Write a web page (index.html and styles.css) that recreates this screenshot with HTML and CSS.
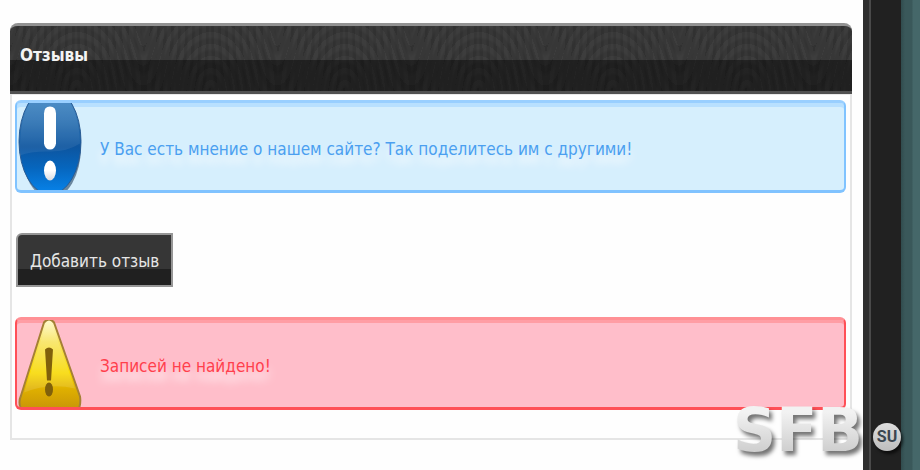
FILE: index.html
```html
<!DOCTYPE html>
<html lang="ru">
<head>
  <meta charset="UTF-8" />
  <meta name="viewport" content="width=device-width, initial-scale=1.0"/>
  <title>Отзывы</title>
  <link rel="stylesheet" href="styles.css">
</head>
<body>
  <div class="page">
    <main class="content">
      <section class="panel">
        <h1 class="panel-title">Отзывы</h1>
        <div class="panel-body">
          <div class="message info">
            <!-- Info icon -->
            <svg class="message-icon" viewBox="0 0 64 86" aria-hidden="true">
              <defs>
                <linearGradient id="ball" x1="0" y1="0" x2="0" y2="1">
                  <stop offset="0" stop-color="#4a8fcb"/>
                  <stop offset="0.3" stop-color="#2f74b4"/>
                  <stop offset="0.55" stop-color="#0d559f"/>
                  <stop offset="0.75" stop-color="#0666be"/>
                  <stop offset="1" stop-color="#0785ed"/>
                </linearGradient>
                <linearGradient id="mark" x1="0" y1="0" x2="0" y2="1">
                  <stop offset="0.5" stop-color="#ffffff"/>
                  <stop offset="1" stop-color="#d9dce2"/>
                </linearGradient>
              </defs>
              <ellipse cx="33" cy="43" rx="30" ry="52" fill="#23415f" opacity="0.6"/>
              <ellipse cx="32" cy="38" rx="31" ry="53" fill="url(#ball)" stroke="#2b5c94"/>
              <path d="M2 40Q3 8 16-6H48Q61 8 62 40Q48 49 29 48Q12 48 2 52Z" fill="#fff" opacity="0.07"/>
              <path d="M26 10Q26 3 32 3T38 10V40Q37 46 32 46T26 40Z" fill="#fff"/>
              <ellipse cx="32" cy="67" rx="6" ry="10" fill="url(#mark)"/>
            </svg>
            <p class="message-text">У Вас есть мнение о нашем сайте? Так поделитесь им с другими!</p>
          </div>

          <button class="btn" type="button">Добавить отзыв</button>

          <div class="message error">
            <!-- Warning icon -->
            <svg class="message-icon" viewBox="0 0 64 86" aria-hidden="true">
              <defs>
                <linearGradient id="sign" x1="0" y1="0" x2="0" y2="1">
                  <stop offset="0" stop-color="#fffbd0"/>
                  <stop offset="0.25" stop-color="#f8e45e"/>
                  <stop offset="0.6" stop-color="#f8d900"/>
                  <stop offset="0.78" stop-color="#dfb000"/>
                  <stop offset="1" stop-color="#c99607"/>
                </linearGradient>
              </defs>
              <path d="M26 2Q31-4 36 2L62 76Q63 82 61 88H3Q0 82 3 75Z" fill="url(#sign)" stroke="#a58035" stroke-width="2"/>
              <path d="M28 4Q31-1 34 4L57 68Q31 62 6 72Z" fill="#fff" opacity="0.12"/>
              <path d="M27 29Q31 25 35 29L33 60H29Z" fill="#80600b"/>
              <ellipse cx="31" cy="69" rx="4" ry="7" fill="#80600b"/>
            </svg>
            <p class="message-text">Записей не найдено!</p>
          </div>
        </div>
      </section>
    </main>
    <aside class="edge"></aside>
  </div>

  <!-- Site mark over the bottom right corner -->
  <div class="mark">
    <span class="mark-name">SFB</span>
    <span class="mark-zone">SU</span>
  </div>
</body>
</html>
```

FILE: styles.css
```css
* {
  margin: 0;
  padding: 0;
  box-sizing: border-box;
}

body {
  font-family: 'DejaVu Sans Condensed', 'DejaVu Sans', sans-serif;
  background: #fefefe;
  color: #222;
  overflow: hidden;
}

.page {
  display: flex;
  min-height: 100vh;
}

.content {
  flex: 1;
  min-width: 0;
  padding: 23px 11px 30px 10px;
}

/* Panel */
.panel {
  border: 2px solid #e5e5e5;
  border-top: none;
  border-radius: 8px 8px 0 0;
}

.panel-title {
  margin: 0 -2px;
  height: 71px;
  padding: 0 10px;
  border-top: 3px solid #929292;
  border-bottom: 3px solid #505050;
  border-radius: 8px 8px 0 0;
  background:
    linear-gradient(transparent 34px, rgba(0, 0, 0, 0.42) 34px),
    repeating-radial-gradient(ellipse 16px 24px at 50% 100%, rgba(0, 0, 0, 0.1) 0 3px, transparent 5px 8px) 0 0 / 134px 66px,
    repeating-radial-gradient(ellipse 12px 34px at 50% 0, rgba(0, 0, 0, 0.1) 0 2px, transparent 4px 7px) 66px 0 / 134px 66px,
    #3d3d3d;
  color: #f4f4f4;
  font-size: 17px;
  line-height: 58px;
}

.panel-body {
  padding: 5px 4px 28px 3px;
  border-top: 1px solid #e8e8e8;
}

/* Messages */
.message {
  display: flex;
  align-items: center;
  height: 93px;
  padding-left: 1px;
  border: 2px solid;
  border-width: 3px 2px;
  border-radius: 6px;
  overflow: hidden;
}

.message-icon {
  flex: none;
  width: 64px;
  height: 87px;
}

.message-text {
  padding: 4px 0 0 18px;
  font-size: 17px;
  line-height: 28px;
}

.info {
  border-color: #99cfff #80c3ff #80c3ff;
  background: #d6effd;
  box-shadow: inset 0 4px 0 #b8e0ff;
  color: #4b9ff0;
  text-shadow: 0 9px 9px #fff;
}

.error {
  border-color: #ff9095 #ff5057 #ff5057;
  background: #ffbeca;
  box-shadow: inset 0 3px 0 #ff9da4;
  color: #ff3f4c;
  text-shadow: 0 9px 9px #fff;
}

/* Button */
.btn {
  display: block;
  height: 54px;
  margin: 40px 0 30px 1px;
  padding: 2px 12px 0;
  border: 2px solid #969696;
  border-radius: 6px 0 0 0;
  background: linear-gradient(#363636 34px, #202020 34px);
  color: #e6e6e6;
  font-family: inherit;
  font-size: 17px;
  cursor: pointer;
}

.btn:hover {
  color: #fff;
}

/* Right edge of the site */
.edge {
  flex: none;
  width: 57px;
  background: linear-gradient(to right, #2e2e2e 6px, #4a4a4a 6px 8px, #212121 8px 38px, #304b4d 38px, #3a585a 42px 49px, #456769 50px);
}

/* Site mark */
.mark {
  position: absolute;
  right: 19px;
  bottom: 10px;
  display: flex;
  align-items: center;
  gap: 10px;
}

.mark-name {
  font-family: 'DejaVu Sans', sans-serif;
  font-size: 60px;
  font-weight: bold;
  line-height: 60px;
  background: linear-gradient(#f2f2f2 20%, #cfcfcf 85%);
  -webkit-background-clip: text;
  background-clip: text;
  color: transparent;
  filter: drop-shadow(3px 4px 2px rgba(0, 0, 0, 0.55));
}

.mark-zone {
  width: 28px;
  height: 28px;
  margin-top: 14px;
  border-radius: 50%;
  background: linear-gradient(#dedede, #bdbdbd);
  box-shadow: 2px 3px 3px rgba(0, 0, 0, 0.6);
  color: #3b4650;
  font-family: Roboto, sans-serif;
  font-size: 16px;
  font-weight: bold;
  line-height: 28px;
  text-align: center;
}
```
